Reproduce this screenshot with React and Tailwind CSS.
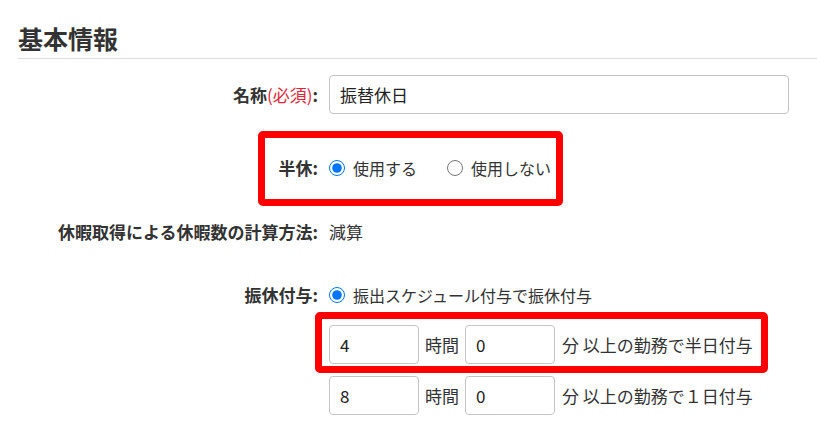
import { useState } from "react";

const font = { fontFamily: '"Noto Sans CJK JP", "Noto Sans", sans-serif' };

function Radio({ checked, onChange, label }) {
  return (
    <label className="flex items-center gap-[8px] cursor-pointer">
      <input
        type="radio"
        checked={checked}
        onChange={onChange}
        className="m-0 w-[16px] h-[16px] accent-[#0075ff]"
      />
      <span>{label}</span>
    </label>
  );
}

function Row({ label, children, className = "" }) {
  return (
    <div className={`grid grid-cols-[300px_1fr] gap-x-[11px] items-center ${className}`}>
      <div className="text-right font-bold text-[17px] text-[#333]">{label}</div>
      <div className="flex items-center">{children}</div>
    </div>
  );
}

function HoursRow({ hours, minutes, suffix, className = "" }) {
  return (
    <div className={`flex items-center pl-[311px] ${className}`}>
      <input
        defaultValue={hours}
        className="w-[90px] h-[39px] px-[10px] border border-[#c4c4c4] rounded-[4px] text-[17px] text-[#222] outline-none"
      />
      <span className="mx-[6px] text-[17px]">時間</span>
      <input
        defaultValue={minutes}
        className="w-[90px] h-[39px] px-[10px] border border-[#c4c4c4] rounded-[4px] text-[17px] text-[#222] outline-none"
      />
      <span className="ml-[7px] text-[17px]">{suffix}</span>
    </div>
  );
}

export default function App() {
  const [halfDay, setHalfDay] = useState(true);

  return (
    <div className="w-[817px] h-[433px] overflow-hidden bg-white text-[16px] text-[#333]" style={font}>
      <div className="pl-[18px]">
        <h2 className="pt-[24px] pb-[6px] text-[25px] font-bold leading-[28px] text-[#333] border-b border-[#dcdcdc]">
          基本情報
        </h2>

        <Row
          className="mt-[16px]"
          label={
            <>
              名称<span className="font-normal text-[#e0263a]">(必須)</span>:
            </>
          }
        >
          <input
            defaultValue="振替休日"
            className="w-[460px] h-[39px] px-[10px] border border-[#c4c4c4] rounded-[4px] text-[17px] text-[#222] outline-none"
          />
        </Row>

        <div className="relative mt-[34px]">
          <div className="absolute left-[240px] top-[-17px] w-[305px] h-[75px] border-[7px] border-[#ff0000] rounded-[5px] pointer-events-none" />
          <Row className="h-[40px]" label="半休:">
            <Radio checked={halfDay} onChange={() => setHalfDay(true)} label="使用する" />
            <div className="ml-[30px]">
              <Radio checked={!halfDay} onChange={() => setHalfDay(false)} label="使用しない" />
            </div>
          </Row>
        </div>

        <Row className="h-[40px] mt-[24px]" label="休暇取得による休暇数の計算方法:">
          <span className="text-[17px]">減算</span>
        </Row>

        <Row className="h-[40px] mt-[23px]" label="振休付与:">
          <Radio checked onChange={() => {}} label="振出スケジュール付与で振休付与" />
        </Row>

        <div className="relative mt-[10px]">
          <div className="absolute left-[297px] top-[-13px] w-[453px] h-[61px] border-[7px] border-[#ff0000] rounded-[5px] pointer-events-none" />
          <HoursRow hours="4" minutes="0" suffix="分 以上の勤務で半日付与" />
        </div>

        <HoursRow className="mt-[12px]" hours="8" minutes="0" suffix="分 以上の勤務で１日付与" />
      </div>
    </div>
  );
}
